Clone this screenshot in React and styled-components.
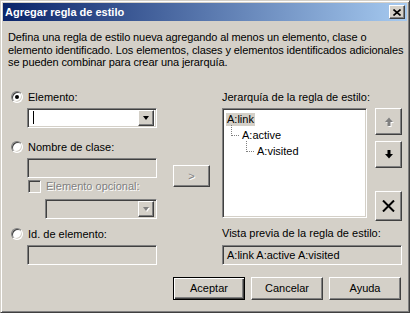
import React from 'react'
import styled, { createGlobalStyle, css } from 'styled-components'

const GlobalStyle = createGlobalStyle`
  html, body {
    margin: 0;
    padding: 0;
    background: #d4d0c8;
  }
  body {
    font-family: "Liberation Sans", Arial, sans-serif;
    font-size: 11px;
    color: #000;
  }
`

const sunken = css`
  box-sizing: border-box;
  border: 1px solid;
  border-color: #808080 #fff #fff #808080;
  box-shadow: inset 1px 1px #404040, inset -1px -1px #d4d0c8;
`

const raised = css`
  box-sizing: border-box;
  border: 1px solid;
  border-color: #fff #404040 #404040 #fff;
  box-shadow: inset -1px -1px #808080, inset 1px 1px #d4d0c8;
`

const Window = styled.div`
  box-sizing: border-box;
  width: 410px;
  height: 313px;
  padding: 3px;
  background: #d4d0c8;
  border: 1px solid;
  border-color: #d4d0c8 #404040 #404040 #d4d0c8;
  box-shadow: inset 1px 1px #fff, inset -1px -1px #808080;
  display: flex;
  flex-direction: column;
`

const TitleBar = styled.div`
  height: 18px;
  margin: -1px -1px 0 -1px;
  padding: 0 2px 0 2px;
  background: linear-gradient(to right, #0a246a, #a6caf0);
  display: flex;
  align-items: center;
  justify-content: space-between;
  color: #fff;
  font-weight: bold;
  font-size: 11px;
`

const CloseButton = styled.div`
  ${raised};
  width: 16px;
  height: 14px;
  background: #d4d0c8;
  display: flex;
  align-items: center;
  justify-content: center;
`

const Content = styled.div`
  padding: 10px 4px 0 4px;
  display: flex;
  flex-direction: column;
`

const Description = styled.p`
  margin: 0;
  line-height: 12.5px;
  white-space: nowrap;
  letter-spacing: -0.1px;
`

const Main = styled.div`
  margin-top: 22px;
  padding-left: 3px;
  display: flex;
`

const LeftCol = styled.div`
  width: 146px;
  display: flex;
  flex-direction: column;
`

const MiddleCol = styled.div`
  margin-left: 16px;
  padding-top: 74px;
`

const RightCol = styled.div`
  margin-left: 12px;
  width: 180px;
  display: flex;
  flex-direction: column;
`

const Row = styled.label`
  height: 13px;
  margin-top: ${p => p.$top || 0}px;
  margin-left: ${p => p.$indent || 0}px;
  display: flex;
  align-items: center;
  gap: 5px;
  color: ${p => (p.$disabled ? '#808080' : '#000')};
  text-shadow: ${p => (p.$disabled ? '1px 1px 0 #fff' : 'none')};
  white-space: nowrap;
`

const RadioCircle = styled.span`
  box-sizing: border-box;
  width: 12px;
  height: 12px;
  flex: none;
  border-radius: 50%;
  background: #fff;
  border: 1px solid;
  border-color: #808080 #fff #fff #808080;
  box-shadow: inset 1px 1px #404040, inset -1px -1px #d4d0c8;
  display: flex;
  align-items: center;
  justify-content: center;
  text-shadow: none;

  &::after {
    content: '';
    width: 4px;
    height: 4px;
    border-radius: 50%;
    background: #000;
    display: ${p => (p.$checked ? 'block' : 'none')};
  }
`

const CheckBox = styled.span`
  ${sunken};
  width: 13px;
  height: 13px;
  flex: none;
  background: #d4d0c8;
`

const Field = styled.div`
  ${sunken};
  position: relative;
  width: ${p => p.$width || 130}px;
  height: 20px;
  margin-top: ${p => p.$top || 0}px;
  margin-left: ${p => p.$indent || 0}px;
  padding: 2px;
  background: ${p => (p.$enabled ? '#fff' : '#d4d0c8')};
  display: flex;
  align-items: center;
  justify-content: space-between;
`

const Caret = styled.span`
  width: 1px;
  height: 13px;
  margin-left: 3px;
  background: #000;
`

const DropButton = styled.span`
  ${raised};
  width: 16px;
  height: 16px;
  margin-left: auto;
  background: #d4d0c8;
  display: flex;
  align-items: center;
  justify-content: center;

  &::after {
    content: '';
    border-left: 3.5px solid transparent;
    border-right: 3.5px solid transparent;
    border-top: 4px solid ${p => (p.$disabled ? '#808080' : '#000')};
    filter: ${p => (p.$disabled ? 'drop-shadow(1px 1px 0 #fff)' : 'none')};
  }
`

const Button = styled.div`
  ${raised};
  width: ${p => p.$width}px;
  height: ${p => p.$height}px;
  margin-top: ${p => p.$top || 0}px;
  background: #d4d0c8;
  display: flex;
  align-items: center;
  justify-content: center;
  color: ${p => (p.$disabled ? '#808080' : '#000')};
  text-shadow: ${p => (p.$disabled ? '1px 1px 0 #fff' : 'none')};
  ${p =>
    p.$default &&
    css`
      border: 1px solid #000;
      box-shadow: inset 1px 1px #fff, inset -1px -1px #404040,
        inset -2px -2px #808080;
    `}
`

const TreeArea = styled.div`
  margin-top: 4px;
  display: flex;
`

const Tree = styled.div`
  ${sunken};
  width: 145px;
  height: 110px;
  padding: 3px 2px;
  background: #fff;
  display: flex;
  flex-direction: column;
`

const TreeItem = styled.div`
  position: relative;
  height: 16px;
  padding-left: ${p => p.$level * 15 + 1}px;
  display: flex;
  align-items: center;

  ${p =>
    p.$level > 0 &&
    css`
      &::before {
        content: '';
        position: absolute;
        left: ${(p.$level - 1) * 15 + 6}px;
        top: -3px;
        width: 7px;
        height: 10px;
        border-left: 1px dotted #808080;
        border-bottom: 1px dotted #808080;
      }
    `}
`

const ItemLabel = styled.span`
  padding: 0 1px;
  line-height: 13px;
  background: ${p => (p.$selected ? '#d4d0c8' : 'transparent')};
`

const SideButtons = styled.div`
  margin-left: 8px;
  display: flex;
  flex-direction: column;
`

const Preview = styled.div`
  ${sunken};
  height: 20px;
  margin-top: 5px;
  padding-left: 4px;
  background: #d4d0c8;
  display: flex;
  align-items: center;
`

const Footer = styled.div`
  margin-top: 12px;
  display: flex;
  justify-content: flex-end;
  gap: 6px;
  padding-right: 1px;
`

const ArrowIcon = ({ down, color, shadow }) => (
  <svg width="8" height="9" viewBox="0 0 8 9" style={shadow ? { filter: 'drop-shadow(1px 1px 0 #fff)' } : undefined}>
    {down ? (
      <>
        <rect x="2.5" y="0" width="3" height="4" fill={color} />
        <polygon points="0,4 8,4 4,8.5" fill={color} />
      </>
    ) : (
      <>
        <polygon points="4,0.5 8,5 0,5" fill={color} />
        <rect x="2.5" y="5" width="3" height="4" fill={color} />
      </>
    )}
  </svg>
)

export default function App() {
  return (
    <>
      <GlobalStyle />
      <Window>
        <TitleBar>
          <span>Agregar regla de estilo</span>
          <CloseButton>
            <svg width="8" height="7" viewBox="0 0 8 7">
              <path d="M0.5 0.5 L7.5 6.5 M7.5 0.5 L0.5 6.5" stroke="#000" strokeWidth="1.6" />
            </svg>
          </CloseButton>
        </TitleBar>
        <Content>
          <Description>
            Defina una regla de estilo nueva agregando al menos un elemento, clase o
            <br />
            elemento identificado. Los elementos, clases y elementos identificados adicionales
            <br />
            se pueden combinar para crear una jerarquía.
          </Description>
          <Main>
            <LeftCol>
              <Row>
                <RadioCircle $checked />
                Elemento:
              </Row>
              <Field $enabled $top={4} $indent={16}>
                <Caret />
                <DropButton />
              </Field>
              <Row $top={13}>
                <RadioCircle />
                Nombre de clase:
              </Row>
              <Field $top={4} $indent={16} />
              <Row $top={2} $indent={17} $disabled>
                <CheckBox />
                Elemento opcional:
              </Row>
              <Field $top={6} $indent={34} $width={112}>
                <DropButton $disabled />
              </Field>
              <Row $top={9}>
                <RadioCircle />
                Id. de elemento:
              </Row>
              <Field $top={4} $indent={16} />
            </LeftCol>
            <MiddleCol>
              <Button $width={37} $height={22} $disabled>
                &gt;
              </Button>
            </MiddleCol>
            <RightCol>
              <Row>Jerarquía de la regla de estilo:</Row>
              <TreeArea>
                <Tree>
                  <TreeItem $level={0}>
                    <ItemLabel $selected>A:link</ItemLabel>
                  </TreeItem>
                  <TreeItem $level={1}>
                    <ItemLabel>A:active</ItemLabel>
                  </TreeItem>
                  <TreeItem $level={2}>
                    <ItemLabel>A:visited</ItemLabel>
                  </TreeItem>
                </Tree>
                <SideButtons>
                  <Button $width={27} $height={27}>
                    <ArrowIcon color="#808080" shadow />
                  </Button>
                  <Button $width={27} $height={27} $top={6}>
                    <ArrowIcon down color="#000" />
                  </Button>
                  <Button $width={27} $height={30} $top={23}>
                    <svg width="13" height="12" viewBox="0 0 13 12">
                      <path d="M1 0.5 L12 11.5 M12 0.5 L1 11.5" stroke="#000" strokeWidth="2" />
                    </svg>
                  </Button>
                </SideButtons>
              </TreeArea>
              <Row $top={6}>Vista previa de la regla de estilo:</Row>
              <Preview>A:link A:active A:visited</Preview>
            </RightCol>
          </Main>
          <Footer>
            <Button $width={72} $height={23} $default>
              Aceptar
            </Button>
            <Button $width={72} $height={23}>
              Cancelar
            </Button>
            <Button $width={72} $height={23}>
              Ayuda
            </Button>
          </Footer>
        </Content>
      </Window>
    </>
  )
}
